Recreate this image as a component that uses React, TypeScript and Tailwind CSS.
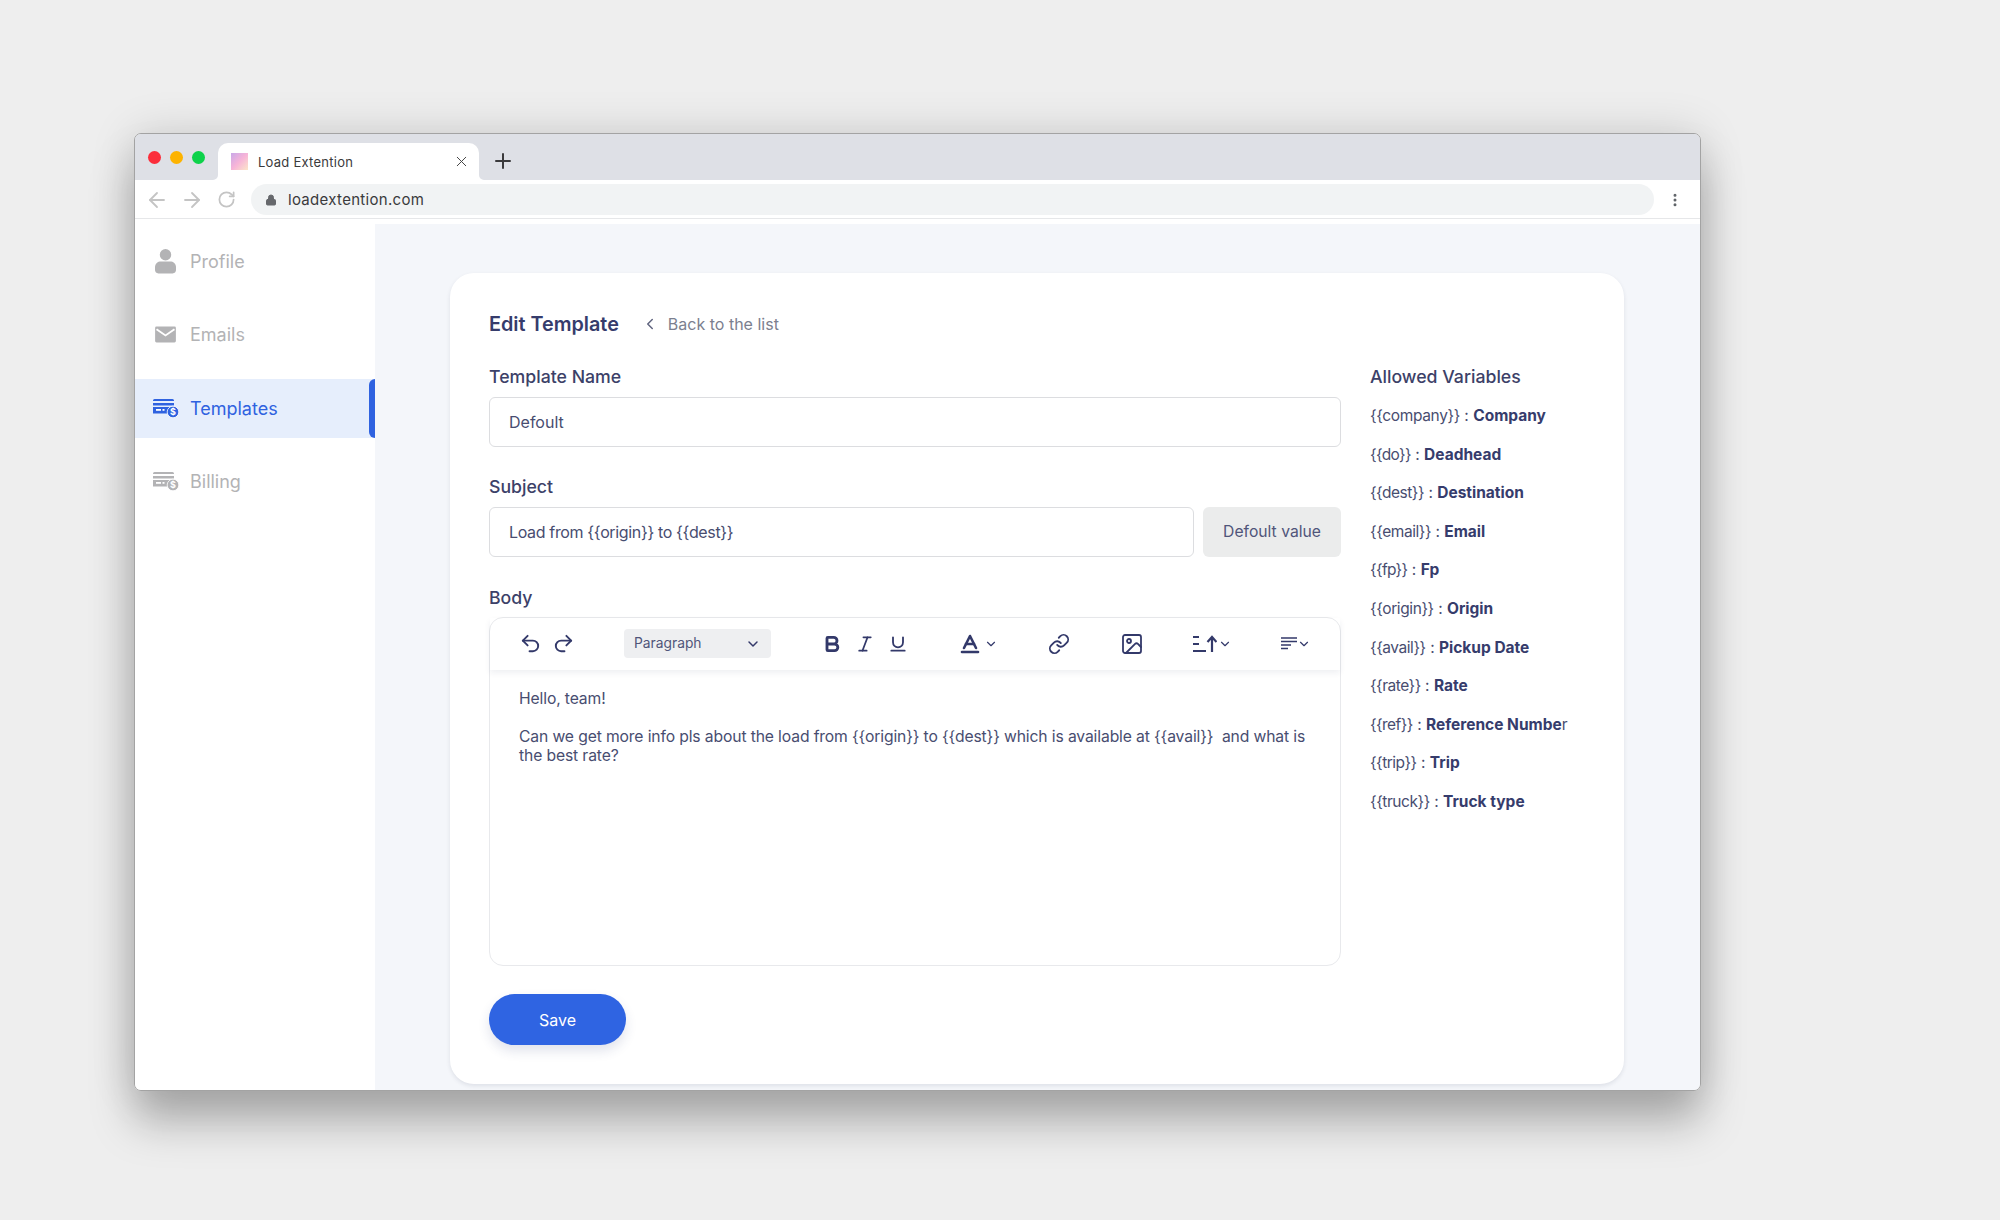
import {
  ArrowLeft,
  ArrowRight,
  Baseline,
  Bold,
  ChevronDown,
  ChevronLeft,
  EllipsisVertical,
  Image,
  Italic,
  Link,
  Lock,
  Plus,
  Redo2,
  RotateCw,
  Underline,
  Undo2,
  X,
} from "lucide-react";

const ProfileIcon = () => (
  <svg width="21" height="25" viewBox="0 0 22 26" fill="currentColor">
    <circle cx="11" cy="6" r="6" />
    <path d="M0 19c0-4 3-6 6-6h10c3 0 6 2 6 6v3c0 2-1.500 3.500-3.500 3.500h-15C1.500 25.500 0 24 0 22z" />
  </svg>
);

const MailIcon = () => (
  <svg width="21" height="17" viewBox="0 0 22 18">
    <rect width="22" height="17" y="0.500" rx="1.500" fill="currentColor" />
    <path d="M1.500 3.500 11 10l9.500-6.500" fill="none" stroke="#fff" strokeWidth="2" />
  </svg>
);

const CardIcon = () => (
  <svg width="26" height="19" viewBox="0 0 26 19">
    <path d="M1.500 0h18A1.500 1.500 0 0 1 21 1.500V2H0v-.5A1.500 1.500 0 0 1 1.500 0z" fill="currentColor" />
    <path d="M0 4h21v2.500H0z" fill="currentColor" />
    <path d="M0 8h21v6.500H0z" fill="currentColor" />
    <rect x="3" y="10" width="5" height="1.800" fill="#fff" />
    <rect x="9.500" y="10" width="2" height="1.800" fill="#fff" />
    <circle cx="20" cy="13" r="5.800" fill="currentColor" stroke="#fff" strokeWidth="0.800" />
    <text x="20" y="16.300" textAnchor="middle" fontSize="9" fontWeight="700" fill="#fff" fontFamily="Inter, sans-serif">
      $
    </text>
  </svg>
);

const LineSpacingIcon = () => (
  <svg width="24" height="18" viewBox="0 0 24 18" fill="none" stroke="currentColor" strokeWidth="2.200">
    <path d="M0 2h6M0 9h6M0 16h13" />
    <path d="M19 17V2M14.500 7 19 2l4.500 5" />
  </svg>
);

const AlignIcon = () => (
  <svg width="17" height="13" viewBox="0 0 17 13" fill="none" stroke="currentColor" strokeWidth="1.600">
    <path d="M0 1h16M0 4.500h16M0 8h10M0 11.500h7" />
  </svg>
);

const navItems = [
  { label: "Profile", icon: <ProfileIcon />, active: false },
  { label: "Emails", icon: <MailIcon />, active: false },
  { label: "Templates", icon: <CardIcon />, active: true },
  { label: "Billing", icon: <CardIcon />, active: false },
];

const variables = [
  ["company", "Company"],
  ["do", "Deadhead"],
  ["dest", "Destination"],
  ["email", "Email"],
  ["fp", "Fp"],
  ["origin", "Origin"],
  ["avail", "Pickup Date"],
  ["rate", "Rate"],
  ["ref", "Reference Numbe"],
  ["trip", "Trip"],
  ["truck", "Truck type"],
];

// the braces in the picture are narrower than in the installed Inter,
// so take the difference out of the whole token
const Var = ({ name, cut }: { name: string; cut: number }) => {
  const token = `{{${name}}}`;
  return <span style={{ letterSpacing: `${-cut / token.length}px` }}>{token}</span>;
};

const Chrome = () => (
  <>
    <div className="flex h-[46px] shrink-0 items-end bg-[#dee0e6]">
      <div className="flex gap-[9px] self-start pl-[13px] pt-[17px]">
        <span className="h-[13px] w-[13px] rounded-full bg-[#fb2d3b]" />
        <span className="h-[13px] w-[13px] rounded-full bg-[#fdb300]" />
        <span className="h-[13px] w-[13px] rounded-full bg-[#0dd24a]" />
      </div>
      <div className="relative ml-[13px] flex h-[37px] w-[261px] items-center rounded-t-[10px] bg-white pl-[13px] pr-[9px]">
        <svg width="5" height="5" viewBox="0 0 5 5" className="absolute bottom-0 left-[-5px]">
          <path d="M5 0v5H0a5 5 0 0 0 5-5z" fill="#fff" />
        </svg>
        <svg width="5" height="5" viewBox="0 0 5 5" className="absolute bottom-0 right-[-5px]">
          <path d="M0 0v5h5a5 5 0 0 1-5-5z" fill="#fff" />
        </svg>
        <span className="h-[17px] w-[17px] bg-gradient-to-br from-[#c9a8e8] via-[#f7b4d8] to-[#fbe6c8]" />
        <span className="ml-[10px] flex-1 pt-[2px] text-[13px] tracking-[0.25px] text-[#3a3a3c]">Load Extention</span>
        <X size={17} strokeWidth={1.4} className="text-[#444]" />
      </div>
      <Plus size={24} strokeWidth={2} className="mb-[7px] ml-[12px] text-[#3a3a3c]" />
    </div>
    <div className="flex h-[39px] shrink-0 items-center border-b border-[#e6e7e9] bg-white pl-[10px] pr-[17px] pt-[1px]">
      <ArrowLeft size={24} strokeWidth={1.8} className="text-[#c4c4c4]" />
      <ArrowRight size={24} strokeWidth={1.8} className="ml-[11px] text-[#c4c4c4]" />
      <RotateCw size={19} strokeWidth={2.2} className="ml-[13px] text-[#c4c4c4]" />
      <div className="ml-[15px] flex h-[31px] flex-1 items-center rounded-full bg-[#f1f3f4] pl-[14px]">
        <Lock size={12} fill="#66686c" strokeWidth={2} className="text-[#66686c]" />
        <span className="ml-[11px] pt-[1px] text-[15px] tracking-[0.3px] text-[#3a3a3c]">loadextention.com</span>
      </div>
      <EllipsisVertical size={16} strokeWidth={2.5} className="ml-[13px] text-[#5f6368]" />
    </div>
    <div className="h-[5px] shrink-0 bg-white" />
  </>
);

const Sidebar = () => (
  <aside className="flex w-[240px] shrink-0 flex-col gap-[14.3px] bg-white pt-[8px]">
    {navItems.map((item) => (
      <div
        key={item.label}
        className={
          item.active
            ? "relative flex h-[59px] items-center bg-[#e6eefc] text-[#2f62e0]"
            : "flex h-[59px] items-center text-[#b3b3b5]"
        }
      >
        <span className="flex w-[55px] justify-center pl-[6px]">{item.icon}</span>
        <span className="text-[18px]">{item.label}</span>
        {item.active && <span className="absolute bottom-0 right-0 top-0 w-[6px] rounded-l-[6px] bg-[#2f62e0]" />}
      </div>
    ))}
  </aside>
);

const Toolbar = () => (
  <div className="relative flex h-[52px] items-center pb-[1px] pl-[29px] text-[#33396a] shadow-[0_3px_6px_rgba(30,40,80,0.07)]">
    <Undo2 size={23} strokeWidth={2} />
    <Redo2 size={23} strokeWidth={2} className="ml-[10px]" />
    <div className="ml-[49px] flex h-[29px] w-[147px] items-center justify-between rounded-[4px] bg-[#eeeff1] pl-[10px] pr-[10px] text-[13.800px] text-[#50557a]">
      Paragraph
      <ChevronDown size={16} strokeWidth={2.2} className="text-[#33396a]" />
    </div>
    <Bold size={20} strokeWidth={3.4} className="ml-[51px]" />
    <Italic size={20} strokeWidth={2} className="ml-[13px]" />
    <Underline size={20} strokeWidth={2.2} className="ml-[13px]" />
    <Baseline size={24} strokeWidth={2.6} className="ml-[50px]" />
    <ChevronDown size={14} strokeWidth={2} className="ml-[2px]" />
    <Link size={22} strokeWidth={2} className="ml-[50px]" />
    <Image size={24} strokeWidth={1.8} className="ml-[50px]" />
    <span className="ml-[49px]">
      <LineSpacingIcon />
    </span>
    <ChevronDown size={14} strokeWidth={2} className="ml-[1px]" />
    <span className="ml-[49px]">
      <AlignIcon />
    </span>
    <ChevronDown size={14} strokeWidth={2} className="ml-[-1px]" />
  </div>
);

const App = () => {
  return (
    <div className="h-[1220px] w-[2000px] overflow-hidden bg-[#eeeeee] pl-[134px] pt-[133px] font-['Inter',sans-serif]">
      <div className="flex h-[958px] w-[1567px] flex-col overflow-hidden rounded-[7px] border border-[#a3a3a3] shadow-[0_32px_44px_rgba(0,0,0,0.26),0_0_46px_rgba(0,0,0,0.14)]">
        <Chrome />
        <div className="flex min-h-0 flex-1">
          <Sidebar />
          <main className="flex-1 bg-[#f4f6fa] pl-[75px] pt-[49px]">
            <div className="h-[811px] w-[1174px] rounded-[24px] bg-white pl-[39px] pt-[38px] shadow-[0_2px_4px_rgba(30,40,70,0.1)]">
              <div className="flex h-[26px] items-center">
                <h1 className="pt-[1px] text-[19.800px] font-semibold text-[#363c6c]">Edit Template</h1>
                <ChevronLeft size={18} strokeWidth={2} className="ml-[22px] text-[#60647f]" />
                <span className="ml-[9px] text-[16px] text-[#7c7f8f]">Back to the list</span>
              </div>
              <div className="mt-[29px] flex gap-[29px]">
                <div className="w-[852px]">
                  <div className="text-[17.700px] font-medium leading-[22px] text-[#3c4168]">Template Name</div>
                  <div className="mt-[9px] flex h-[50px] items-center rounded-[6px] border border-[#dcdde0] pb-[1px] pl-[19px] text-[16px] text-[#484d70]">
                    Defoult
                  </div>
                  <div className="mt-[29px] text-[17.700px] font-medium leading-[22px] text-[#3c4168]">Subject</div>
                  <div className="mt-[9px] flex gap-[9px]">
                    <div className="flex h-[50px] flex-1 items-center rounded-[6px] border border-[#dcdde0] pl-[19px] text-[16px] tracking-[-0.35px] text-[#484d70]">
                      {"Load from {{origin}} to {{dest}}"}
                    </div>
                    <div className="flex h-[50px] w-[138px] items-center justify-center rounded-[6px] bg-[#ebecec] text-[15.700px] text-[#50557a]">
                      Defoult value
                    </div>
                  </div>
                  <div className="mt-[30px] text-[17.700px] font-medium leading-[22px] text-[#3c4168]">Body</div>
                  <div className="mt-[8px] h-[349px] rounded-[14px] border border-[#e8e9ec]">
                    <Toolbar />
                    <div className="pl-[29px] pr-[30px] pt-[19px] text-[15.700px] leading-[19px] tracking-[-0.13px] text-[#484d70]">
                      <p>Hello, team!</p>
                      <p className="mt-[19px]">
                        {"Can we get more info pls about the load from {{origin}} to {{dest}} which is available at {{avail}}\u00a0 and what is the best rate?"}
                      </p>
                    </div>
                  </div>
                  <button className="mt-[28px] h-[51px] w-[137px] rounded-full bg-[#2f64e2] text-[16px] text-white shadow-[0_6px_12px_rgba(40,60,120,0.14)]">
                    Save
                  </button>
                </div>
                <div>
                  <div className="text-[17.700px] font-medium leading-[22px] text-[#3c4168]">Allowed Variables</div>
                  <div className="mt-[17px] flex flex-col gap-[16.6px] text-[15.500px] leading-[22px] text-[#484d70]">
                    {variables.map(([name, label]) => (
                      <div key={name}>
                        <Var name={name} cut={4} /> : <span className="font-bold text-[#363c6c]">{label}</span>
                        {name === "ref" && "r"}
                      </div>
                    ))}
                  </div>
                </div>
              </div>
            </div>
          </main>
        </div>
      </div>
    </div>
  );
};

export default App;
